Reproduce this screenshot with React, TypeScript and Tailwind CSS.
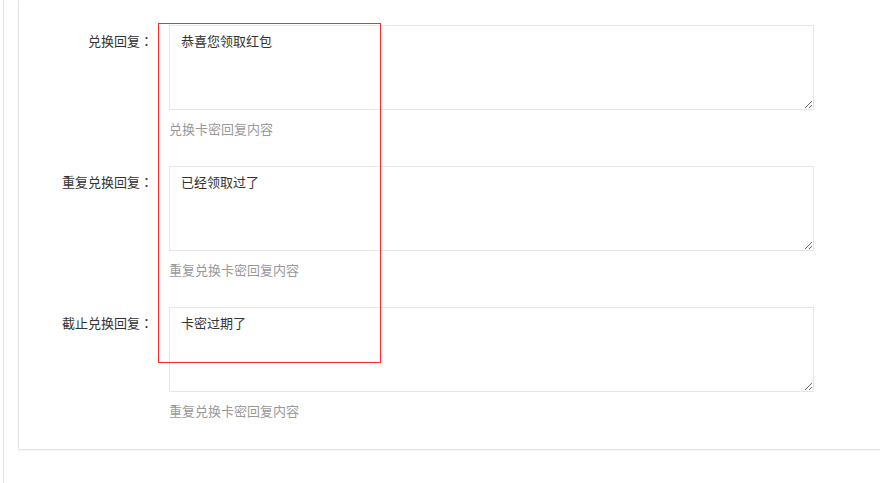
import React from 'react';

const rows = [
  { label: '兑换回复', value: '恭喜您领取红包', help: '兑换卡密回复内容' },
  { label: '重复兑换回复', value: '已经领取过了', help: '重复兑换卡密回复内容' },
  { label: '截止兑换回复', value: '卡密过期了', help: '重复兑换卡密回复内容' },
];

function FormRow({ label, value, help }: { label: string; value: string; help: string }) {
  return (
    <div className="flex mb-[27px]">
      <label className="w-[134px] shrink-0 text-right pt-[6px] leading-[20px] text-[#333]">
        {label}
        {/* TC font centres the full-width colon in its box */}
        <span style={{ fontFamily: '"Noto Sans CJK TC", sans-serif' }}>：</span>
      </label>
      <div className="ml-[16px]">
        <textarea
          defaultValue={value}
          className="block w-[645px] h-[85px] border border-[#e6e6e6] bg-white pl-[11px] pr-2 pt-[5px] leading-[20px] text-[13px] text-[#333] outline-none"
          style={{ fontFamily: '"Noto Sans CJK SC", "Noto Sans", sans-serif' }}
        />
        <div className="mt-[9px] leading-[20px] text-[#999]">{help}</div>
      </div>
    </div>
  );
}

export default function App() {
  return (
    <div
      className="relative w-[880px] h-[483px] overflow-hidden bg-white text-[13px]"
      style={{ fontFamily: '"Noto Sans CJK SC", "Noto Sans", sans-serif' }}
    >
      <div className="ml-[3px] h-full border-l border-[#e4e4e4]">
        <div className="ml-[14px] w-[900px] border-x border-b border-[#e4e4e4] rounded-b-[2px] shadow-[0_1px_2px_rgba(0,0,0,0.06)] pt-[25px] pb-[1px]">
          {rows.map((r) => (
            <FormRow key={r.label} {...r} />
          ))}
        </div>
      </div>

      {/* annotation box */}
      <div className="absolute left-[158px] top-[23px] w-[223px] h-[340px] border border-[#ff2a2a] pointer-events-none" />
    </div>
  );
}
